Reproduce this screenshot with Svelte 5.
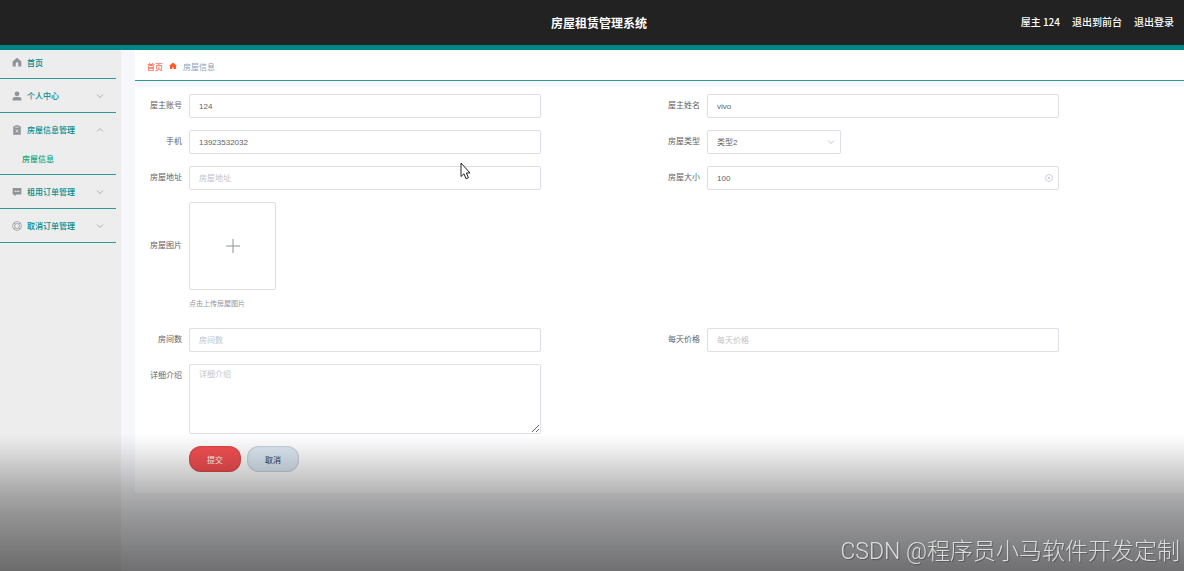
<script lang="ts">
	type MenuItem = { icon: string; label: string; open?: boolean; children?: string[] };

	const menu: MenuItem[] = [
		{ icon: 'user', label: '个人中心' },
		{ icon: 'clipboard', label: '房屋信息管理', open: true, children: ['房屋信息'] },
		{ icon: 'chat', label: '租用订单管理' },
		{ icon: 'ring', label: '取消订单管理' }
	];

	let form = $state({
		account: '124',
		name: 'vivo',
		phone: '13923532032',
		type: '类型2',
		address: '',
		size: '100',
		rooms: '',
		price: '',
		detail: ''
	});
</script>

{#snippet icon(name: string)}
	<svg class="icon" viewBox="0 0 16 16" aria-hidden="true">
		{#if name === 'home'}
			<path d="M8 1 1 7v8h5v-4.500a2 2 0 0 1 4 0V15h5V7z" fill="currentColor" />
		{:else if name === 'user'}
			<circle cx="8" cy="4.500" r="3.800" fill="currentColor" />
			<path d="M1 15v-2.500Q1 9.500 5 9.500h6q4 0 4 3V15z" fill="currentColor" />
		{:else if name === 'clipboard'}
			<path d="M2 2h3V.500h6V2h3v13.500H2z" fill="currentColor" />
			<path d="M5 3.500h6M6 7l4 5M10 7l-4 5" stroke="#ededed" stroke-width="1.200" />
		{:else if name === 'chat'}
			<path d="M1 1.500h14v10.500H7l-3 3v-3H1z" fill="currentColor" />
			<path d="M4 6h2v2H4zM7 6h2v2H7zM10 6h2v2h-2z" fill="#ededed" />
		{:else}
			<g fill="none" stroke="currentColor" stroke-width="1.200">
				<circle cx="8" cy="8" r="7" />
				<circle cx="8" cy="8" r="4" />
				<path d="m3 3 2.200 2.200M13 3l-2.200 2.200M3 13l2.200-2.200M13 13l-2.200-2.200" />
			</g>
		{/if}
	</svg>
{/snippet}

{#snippet chevron(up = false)}
	<svg class="chevron" class:up viewBox="0 0 8 8" aria-hidden="true">
		<path d="m1 2.500 3 3 3-3" fill="none" stroke="currentColor" />
	</svg>
{/snippet}

<div class="page">
	<header>
		<h1>房屋租赁管理系统</h1>
		<nav class="account">
			<span>屋主 124</span>
			<a href="#front">退出到前台</a>
			<a href="#logout">退出登录</a>
		</nav>
	</header>

	<div class="body">
		<aside>
			<ul class="menu">
				<li class="first">
					<a class="item" href="#home">{@render icon('home')}首页</a>
				</li>
				{#each menu as item}
					<li>
						<button class="item" type="button" aria-expanded={!!item.open}>
							{@render icon(item.icon)}
							{item.label}
							{@render chevron(item.open)}
						</button>
						{#if item.open}
							{#each item.children ?? [] as child}
								<a class="child" href="#house">{child}</a>
							{/each}
						{/if}
					</li>
				{/each}
			</ul>
		</aside>

		<main>
			<nav class="breadcrumb">
				<a href="#home">首页</a>
				<svg viewBox="0 0 16 16" aria-hidden="true">
					<path d="M8 1 0 8h2v6h4.500v-3h3v3H14V8h2z" fill="#ff5a1f" />
				</svg>
				<span>房屋信息</span>
			</nav>

			<form onsubmit={(e) => e.preventDefault()}>
				<div class="field">
					<label for="account">屋主账号</label>
					<input id="account" class="control" bind:value={form.account} />
				</div>
				<div class="field">
					<label for="name">屋主姓名</label>
					<input id="name" class="control" bind:value={form.name} />
				</div>
				<div class="field">
					<label for="phone">手机</label>
					<input id="phone" class="control" bind:value={form.phone} />
				</div>
				<div class="field">
					<label for="type">房屋类型</label>
					<div class="select">
						<select id="type" class="control" bind:value={form.type}>
							<option>类型1</option>
							<option>类型2</option>
						</select>
						{@render chevron()}
					</div>
				</div>
				<div class="field">
					<label for="address">房屋地址</label>
					<input id="address" class="control" placeholder="房屋地址" bind:value={form.address} />
				</div>
				<div class="field">
					<label for="size">房屋大小</label>
					<div class="clearable">
						<input id="size" class="control" bind:value={form.size} />
						<button type="button" aria-label="清空" onclick={() => (form.size = '')}>
							<svg viewBox="0 0 16 16" aria-hidden="true">
								<g fill="none" stroke="currentColor" stroke-width="1.500">
									<circle cx="8" cy="8" r="7" />
									<path d="m5.500 5.500 5 5M10.500 5.500l-5 5" />
								</g>
							</svg>
						</button>
					</div>
				</div>

				<div class="field wide picture">
					<label for="upload">房屋图片</label>
					<div>
						<button id="upload" class="upload" type="button">
							<svg viewBox="0 0 14 14" aria-hidden="true">
								<path d="M7 0v14M0 7h14" stroke="currentColor" />
							</svg>
						</button>
						<p class="hint">点击上传房屋图片</p>
					</div>
				</div>

				<div class="field">
					<label for="rooms">房间数</label>
					<input id="rooms" class="control" placeholder="房间数" bind:value={form.rooms} />
				</div>
				<div class="field">
					<label for="price">每天价格</label>
					<input id="price" class="control" placeholder="每天价格" bind:value={form.price} />
				</div>
				<div class="field">
					<label for="detail">详细介绍</label>
					<textarea id="detail" class="control" placeholder="详细介绍" bind:value={form.detail}
					></textarea>
				</div>

				<div class="actions wide">
					<button class="submit" type="submit">提交</button>
					<button class="cancel" type="button">取消</button>
				</div>
			</form>
		</main>
	</div>
</div>

<div class="shade"></div>
<div class="watermark">CSDN @程序员小马软件开发定制</div>
<svg class="pointer" viewBox="0 0 11 18" aria-hidden="true">
	<path d="M1 1v13.500l3-2.700 2 5 2.400-1-2-4.800H10z" fill="#fff" stroke="#222" />
</svg>

<style>
	:global(body) {
		background: #f6f7fa;
		font-family: 'Liberation Sans', 'Noto Sans CJK SC', sans-serif;
		font-size: 8px;
		color: #606266;
	}

	* {
		box-sizing: border-box;
	}

	a {
		text-decoration: none;
	}

	button,
	input,
	select,
	textarea {
		font: inherit;
		color: inherit;
	}

	button {
		padding: 0;
		border: none;
		background: none;
		cursor: pointer;
	}

	.page {
		display: flex;
		flex-direction: column;
		min-height: 100vh;
	}

	header {
		display: grid;
		grid-template-columns: 1fr auto 1fr;
		align-items: center;
		height: 50px;
		padding: 0 10px 0 24px;
		background: #222;
		border-bottom: 5px solid #008587;
		color: #fff;
	}

	h1 {
		grid-column: 2;
		margin: 0;
		font-size: 12px;
		font-weight: 700;
	}

	.account {
		display: flex;
		justify-content: flex-end;
		gap: 12px;
		padding-bottom: 2px;
		font-family: 'Noto Sans CJK SC', sans-serif;
		font-size: 10px;
		font-weight: 500;
	}

	.account a {
		color: inherit;
	}

	.body {
		display: flex;
		flex: 1;
	}

	aside {
		flex: 0 0 121px;
		padding-right: 5px;
		background: #ededed;
	}

	.menu {
		margin: 0;
		padding: 0;
		list-style: none;
	}

	.menu li {
		border-bottom: 1px solid #2e9999;
	}

	.item {
		display: flex;
		align-items: center;
		gap: 5px;
		width: 100%;
		height: 33px;
		padding: 0 12px;
		color: #008b8b;
		font-weight: 500;
	}

	.first .item {
		height: 28px;
		padding-bottom: 4px;
	}

	.icon {
		width: 10px;
		height: 10px;
		color: #909399;
	}

	.chevron {
		width: 8px;
		height: 8px;
		color: #a5b4b6;
	}

	.chevron.up {
		transform: rotate(180deg);
	}

	.item .chevron {
		margin-left: auto;
	}

	.child {
		display: block;
		padding-left: 22px;
		line-height: 28px;
		color: #00a67c;
		font-weight: 500;
	}

	main {
		flex: 1;
		min-width: 0;
		padding-left: 14px;
	}

	.breadcrumb {
		display: flex;
		align-items: center;
		gap: 6px;
		height: 31px;
		padding: 2px 12px 0;
		background: #fff;
		border-bottom: 1px solid #2e9999;
		color: #8c9fba;
	}

	.breadcrumb a {
		color: #f53b3b;
	}

	.breadcrumb svg {
		width: 8px;
		height: 8px;
	}

	form {
		display: grid;
		grid-template-columns: 1fr 1fr;
		row-gap: 12px;
		margin-top: 6px;
		padding: 7px 6px 21px 7px;
		background: #fff;
	}

	.wide {
		grid-column: 1 / -1;
	}

	.field {
		display: flex;
		align-items: flex-start;
		gap: 7px;
	}

	label {
		flex: 0 0 40px;
		line-height: 24px;
		text-align: right;
	}

	.control {
		width: 68%;
		height: 24px;
		padding: 0 9px;
		border: 1px solid #dcdfe6;
		border-radius: 2px;
		background: #fff;
		outline: none;
	}

	.control:focus {
		border-color: #008b8b;
	}

	.control::placeholder {
		color: #c0c4cc;
	}

	.select,
	.clearable {
		position: relative;
		width: 68%;
	}

	.select {
		width: 134px;
	}

	.select .control,
	.clearable .control {
		display: block;
		width: 100%;
	}

	select {
		appearance: none;
	}

	.select .chevron {
		position: absolute;
		top: 8px;
		right: 6px;
		color: #c0c4cc;
		pointer-events: none;
	}

	.clearable button {
		position: absolute;
		top: 8px;
		right: 6px;
		width: 8px;
		height: 8px;
		color: #c0c4cc;
	}

	.clearable svg {
		display: block;
	}

	.picture label {
		line-height: 88px;
	}

	.upload {
		display: grid;
		place-items: center;
		width: 87px;
		height: 88px;
		border: 1px solid #dcdfe6;
		border-radius: 2px;
		color: #8c939d;
	}

	.upload svg {
		width: 14px;
		height: 14px;
	}

	.hint {
		margin: 6px 0 4px;
		font-size: 7px;
		line-height: 16px;
		color: #909399;
	}

	textarea.control {
		height: 70px;
		padding: 4px 9px;
		line-height: 12px;
		resize: vertical;
	}

	.actions {
		display: flex;
		gap: 6px;
		padding-left: 47px;
	}

	.actions button {
		width: 52px;
		height: 26px;
		border-radius: 12px;
		box-shadow: inset 0 0 2px rgba(0, 0, 0, 0.3);
	}

	.submit {
		background: #f55053;
		color: #fff;
	}

	.cancel {
		background: #dde9f4;
		color: #333;
	}

	.shade {
		position: fixed;
		inset: auto 0 0;
		height: 138px;
		background: linear-gradient(
			rgba(0, 0, 0, 0),
			rgba(0, 0, 0, 0.05) 10%,
			rgba(0, 0, 0, 0.29) 43%,
			rgba(0, 0, 0, 0.38) 60%,
			rgba(0, 0, 0, 0.55)
		);
		pointer-events: none;
	}

	.watermark {
		position: fixed;
		right: 4px;
		bottom: 5px;
		font-family: Roboto, 'Noto Sans CJK SC', sans-serif;
		font-size: 23px;
		font-weight: 300;
		color: #dcdcdc;
		text-shadow: 1px 1px 1px rgba(0, 0, 0, 0.3);
		pointer-events: none;
	}

	.pointer {
		position: fixed;
		top: 162px;
		left: 460px;
		width: 11px;
		height: 18px;
		pointer-events: none;
	}
</style>
